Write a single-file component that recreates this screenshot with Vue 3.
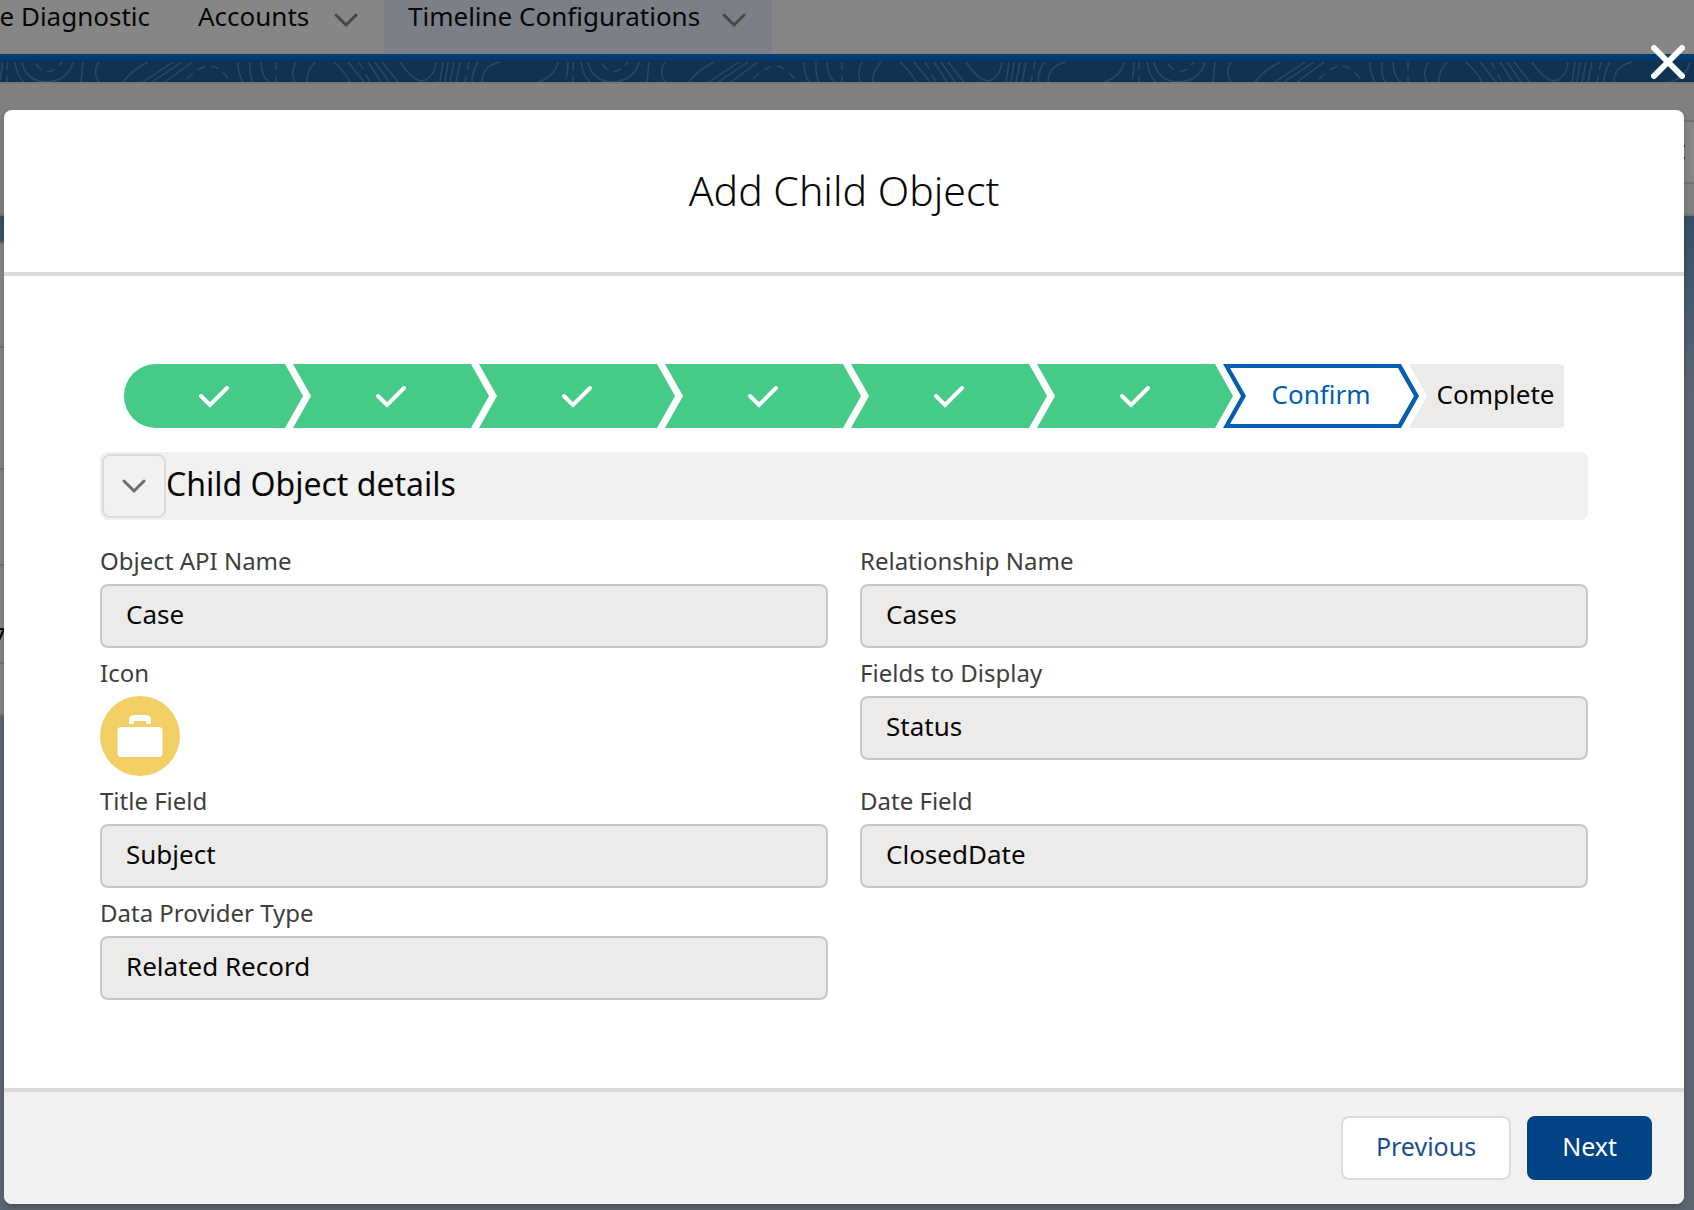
<script setup>
const doneSteps = ['Object', 'Relationship', 'Icon', 'Fields', 'Title', 'Date']

const fields = [
  { id: 'object-api-name', label: 'Object API Name', value: 'Case' },
  { id: 'relationship-name', label: 'Relationship Name', value: 'Cases' },
  { id: 'icon', label: 'Icon', icon: true },
  { id: 'fields-to-display', label: 'Fields to Display', value: 'Status' },
  { id: 'title-field', label: 'Title Field', value: 'Subject' },
  { id: 'date-field', label: 'Date Field', value: 'ClosedDate' },
  { id: 'data-provider-type', label: 'Data Provider Type', value: 'Related Record' },
]
</script>

<template>
  <div class="app">
    <div class="page">
      <nav class="nav">
        <a class="tab tab-first" href="#">e Diagnostic</a>
        <a class="tab" href="#">
          Accounts
          <svg class="chevron" viewBox="0 0 24 16"><path d="M2 3 L12 13 L22 3" /></svg>
        </a>
        <a class="tab tab-active" href="#">
          Timeline Configurations
          <svg class="chevron" viewBox="0 0 24 16"><path d="M2 3 L12 13 L22 3" /></svg>
        </a>
      </nav>
      <svg class="topography" aria-hidden="true">
        <defs>
          <pattern id="contours" width="566" height="22" patternUnits="userSpaceOnUse">
            <g fill="none" stroke="#2a4963" stroke-width="1.5">
              <path d="M2 2Q2 14 -1 22M15 2Q17 16 24 22M22 2Q26 21 46 22Q68 21 73 2M83 2Q82 12 81 22M99 2Q92 12 99 22M148 2Q132 10 123 22M173 2L143 22M182 2L152 22M192 2L165 22M238 2Q238 14 243 22M250 2Q249 14 253 22M261 2Q261 16 269 22M296 2Q290 14 295 22M315 2Q306 12 307 22M334 2Q345 12 350 22M348 2L364 22M368 2L381 22M375 2L389 22M382 2L398 22M400 2Q412 20 422 21Q434 18 436 2M443 2L440 22M448 2L445 22M454 2L450 22M460 2L456 22M478 2Q472 12 472 22M500 2Q482 6 482 22M558 2Q555 16 539 22" />
              <path stroke-dasharray="8 6" d="M7 2V22M36 4Q48 20 62 2M187 19Q213 -8 230 22M276 2V22M359 2L370 22M469 2L465 22" />
            </g>
          </pattern>
        </defs>
        <rect width="100%" height="22" fill="url(#contours)" />
      </svg>
      <div class="page-header">
        <div class="page-actions"><span class="action-mark"></span></div>
      </div>
      <div class="record-area">
        <div class="record-list">
          <div class="row row-1"></div>
          <div class="row row-2"></div>
          <div class="row row-3"></div>
          <div class="row row-4"><span class="row-text">7</span></div>
          <div class="row row-5"></div>
        </div>
      </div>
    </div>

    <div class="overlay">
      <button class="close" type="button" aria-label="Close">
        <svg viewBox="0 0 34 34"><path d="M3 3 L31 31 M31 3 L3 31" /></svg>
      </button>
      <section class="modal" role="dialog" aria-labelledby="modal-title">
        <header class="modal-header">
          <h1 id="modal-title">Add Child Object</h1>
        </header>

        <div class="modal-body">
          <ol class="path">
            <li v-for="step in doneSteps" :key="step" class="step step-done" :aria-label="step">
              <svg viewBox="0 0 30 22"><path d="M2 10 L11 19 L28 2" /></svg>
            </li>
            <li class="step step-current"><span>Confirm</span></li>
            <li class="step step-last"><span>Complete</span></li>
          </ol>

          <div class="section-title">
            <button class="toggle" type="button" aria-label="Toggle section">
              <svg class="chevron" viewBox="0 0 24 16"><path d="M2 3 L12 13 L22 3" /></svg>
            </button>
            <h2>Child Object details</h2>
          </div>

          <div class="fields">
            <div v-for="field in fields" :key="field.id" class="field">
              <template v-if="field.icon">
                <span class="label">{{ field.label }}</span>
                <svg class="case-icon" viewBox="0 0 80 80">
                  <circle cx="40" cy="40" r="40" fill="#f2cf64" />
                  <path d="M29 28V24Q29 19 34 19H46Q51 19 51 24V28H46V26Q46 25 45 25H35Q34 25 34 26V28Z" fill="#fff" />
                  <rect x="17.500" y="31" width="45" height="30" rx="4" fill="#fff" />
                </svg>
              </template>
              <template v-else>
                <label class="label" :for="field.id">{{ field.label }}</label>
                <input :id="field.id" type="text" :value="field.value" readonly />
              </template>
            </div>
          </div>
        </div>

        <footer class="modal-footer">
          <button class="button" type="button">Previous</button>
          <button class="button button-brand" type="button">Next</button>
        </footer>
      </section>
    </div>
  </div>
</template>

<style>
body {
  margin: 0;
}
</style>

<style scoped>
.app {
  position: relative;
  min-height: 100vh;
  overflow: hidden;
  font-family: "Noto Sans", "Open Sans", sans-serif;
  font-size: 26px;
  color: #080707;
  background: #5c6672;
}

.app *,
.app *::before {
  box-sizing: border-box;
}

.page {
  display: flex;
  flex-direction: column;
}

.nav {
  display: flex;
  height: 60px;
  background: #868686;
  border-bottom: 6px solid #013d70;
}

.tab {
  display: flex;
  justify-content: space-between;
  width: 210px;
  padding: 0 26px 0 24px;
  line-height: 32px;
  color: #080707;
  text-decoration: none;
  white-space: nowrap;
}

.tab-first {
  justify-content: flex-end;
  width: 174px;
  padding: 0 24px 0 0;
}

.tab-active {
  width: 388px;
  background: #7c7f88;
}

.chevron {
  width: 24px;
  height: 16px;
  fill: none;
  stroke: #4a4745;
  stroke-width: 3;
  stroke-linecap: round;
}

.tab .chevron {
  margin-top: 12px;
}

.topography {
  display: block;
  width: 100%;
  height: 22px;
  background: #113253;
}

.page-header {
  height: 134px;
  padding-top: 36px;
  background: #827f7f;
  border-top: 2px solid #7a7675;
  border-bottom: 2px solid #73706f;
}

.page-actions {
  display: flex;
  justify-content: flex-end;
  align-items: center;
  height: 64px;
  padding-right: 9px;
  background: #868686;
  border: solid #747271;
  border-width: 2px 0;
  margin-left: 50%;
}

.action-mark {
  width: 4px;
  height: 14px;
  border: solid #0c3566;
  border-width: 2px 0;
}

.record-area {
  padding-top: 26px;
  background: linear-gradient(#364f69, #5c6672 180px);
}

.record-list {
  width: 50%;
  background: #868583;
  border-top: 2px solid #747271;
}

.row {
  border-bottom: 2px solid #747271;
}

.row-1 {
  height: 104px;
}

.row-2 {
  height: 122px;
}

.row-3 {
  height: 96px;
}

.row-4 {
  height: 98px;
  padding-top: 52px;
  overflow: hidden;
}

.row-5 {
  height: 52px;
}

.row-text {
  display: block;
  width: 6px;
  direction: rtl;
  line-height: 36px;
}

.overlay {
  position: absolute;
  inset: 0;
  padding: 110px 10px 6px 4px;
}

.close {
  position: absolute;
  top: 45px;
  right: 9px;
  width: 34px;
  height: 34px;
  padding: 0;
  border: 0;
  background: none;
}

.close svg {
  display: block;
  fill: none;
  stroke: #fff;
  stroke-width: 6;
  stroke-linecap: round;
}

.modal {
  display: flex;
  flex-direction: column;
  min-height: 100%;
  background: #fff;
  border-radius: 8px;
  box-shadow: 0 4px 6px rgba(0, 0, 0, 0.2);
}

.modal-header {
  padding: 52px 32px 54px;
  border-bottom: 4px solid #dddbda;
  text-align: center;
}

h1 {
  margin: 0;
  font-size: 41px;
  font-weight: 300;
  line-height: 56px;
}

.modal-body {
  flex: 1;
  padding: 88px 96px;
}

.path {
  display: flex;
  height: 64px;
  margin: 0 24px 24px;
  padding: 0;
  list-style: none;
}

.step {
  display: flex;
  flex: 196 1 0;
  align-items: center;
  justify-content: center;
  min-width: 0;
  padding-bottom: 4px;
  clip-path: polygon(0 0, calc(100% - 18px) 0, 100% 50%, calc(100% - 18px) 100%, 0 100%, 18px 50%);
}

.step + .step {
  margin-left: -10px;
}

.step-done {
  background: #45cb87;
}

.step-done:first-child {
  flex-grow: 179;
  border-radius: 32px 0 0 32px;
  clip-path: polygon(0 0, calc(100% - 18px) 0, 100% 50%, calc(100% - 18px) 100%, 0 100%);
}

.step svg {
  width: 30px;
  height: 22px;
  margin-top: 6px;
  fill: none;
  stroke: #fff;
  stroke-width: 4;
  stroke-linecap: round;
}

.step-current {
  position: relative;
  background: #005fb2;
  color: #005fb2;
}

.step-current::before {
  content: "";
  position: absolute;
  inset: 4px 5px 4px 7px;
  background: #fff;
  clip-path: polygon(0 0, calc(100% - 16px) 0, 100% 50%, calc(100% - 16px) 100%, 0 100%, 16px 50%);
}

.step-current span {
  position: relative;
}

.step-last {
  flex-grow: 155;
  background: #ecebea;
  border-radius: 0 8px 8px 0 / 0 2px 2px 0;
  clip-path: polygon(0 0, 100% 0, 100% 100%, 0 100%, 18px 50%);
}

.step-last span {
  padding-left: 18px;
}

.section-title {
  display: flex;
  align-items: center;
  height: 68px;
  margin-bottom: 16px;
  padding: 2px;
  background: #f1f1f1;
  border-radius: 8px;
}

.toggle {
  display: flex;
  align-items: center;
  justify-content: center;
  width: 64px;
  height: 64px;
  padding: 0;
  background: #f1f1f1;
  border: 2px solid #dddbda;
  border-radius: 8px;
}

.toggle .chevron {
  stroke: #706e6b;
}

h2 {
  margin: 0;
  padding-bottom: 4px;
  font-size: 32px;
  font-weight: 400;
  line-height: 60px;
}

.fields {
  display: grid;
  grid-template-columns: 1fr 1fr;
  column-gap: 32px;
}

.field {
  display: flex;
  flex-direction: column;
}

.label {
  padding: 7px 0 5px;
  font-size: 24px;
  line-height: 36px;
  color: #3e3e3c;
}

.case-icon {
  width: 80px;
  height: 80px;
}

input {
  width: 100%;
  height: 64px;
  padding: 0 24px 4px;
  font: inherit;
  color: #080707;
  background: #ecebea;
  border: 2px solid #c9c7c5;
  border-radius: 8px;
}

.modal-footer {
  display: flex;
  justify-content: flex-end;
  gap: 16px;
  padding: 24px 32px;
  background: #f1f1f1;
  border-top: 4px solid #dddbda;
  border-radius: 0 0 8px 8px;
}

.button {
  height: 64px;
  padding: 0 33px 4px;
  font: inherit;
  font-size: 25px;
  color: #1b4f91;
  background: #fff;
  border: 2px solid #dddbda;
  border-radius: 8px;
}

.button-brand {
  color: #fff;
  background: #014486;
  border-color: #014486;
}
</style>
